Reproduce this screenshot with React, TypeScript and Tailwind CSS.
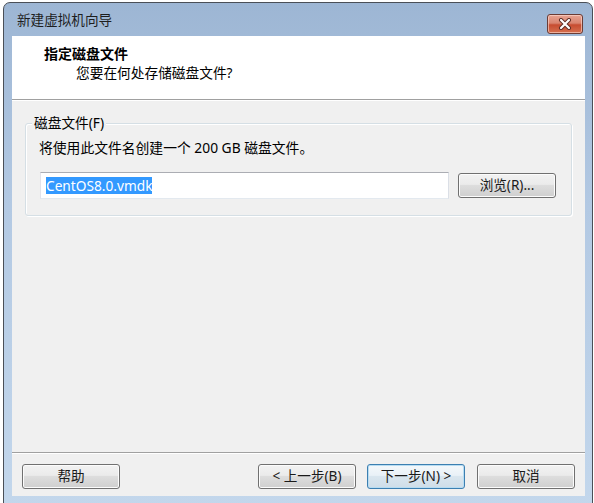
import React from "react";

const font = { fontFamily: '"Segoe UI","Noto Sans","Noto Sans CJK SC",sans-serif' };

function Btn({ children, focused = false, className = "" }: { children: React.ReactNode; focused?: boolean; className?: string }) {
  return (
    <div
      className={
        "h-[25px] w-[98px] rounded-[3px] border flex items-center justify-center text-[13.6px] text-[#1a1a1a] " +
        (focused
          ? "border-[#3c7fb1] bg-[linear-gradient(to_bottom,#f4f8fb_0%,#e9f1f7_45%,#d9e6ef_50%,#cfdde8_100%)] shadow-[inset_0_0_0_1px_#b7dcf2] "
          : "border-[#707070] bg-[linear-gradient(to_bottom,#f2f2f2_0%,#ebebeb_45%,#dddddd_50%,#cfcfcf_100%)] shadow-[inset_0_0_0_1px_#fcfcfc] ") +
        className
      }
    >
      {children}
    </div>
  );
}

export default function App() {
  return (
    <div className="w-[594px] h-[503px] bg-white pt-[2px] pl-[3px] pr-[1px] overflow-hidden" style={font}>
      <div className="h-[510px] border border-[#4a4f57] rounded-t-[7px] bg-[linear-gradient(to_bottom,#9db6d4_0%,#b3c9e3_40%,#c3d7ec_100%)] flex flex-col">
        {/* title bar */}
        <div className="h-[33px] flex items-center pl-[13px] pr-[9px] shrink-0">
          <span className="text-[13.6px] text-[#1e1e1e] pt-[2px]">新建虚拟机向导</span>
          <div className="ml-auto mt-[8px] h-[20px] w-[36px] rounded-[3px] border border-[#6b3c35] bg-[linear-gradient(to_bottom,#e8a493_0%,#d9846f_45%,#c74c30_55%,#d5704f_100%)] shadow-[inset_0_0_0_1px_rgba(255,220,210,0.6)] flex items-center justify-center">
            <svg width="14" height="12" viewBox="0 0 14 12">
              <path d="M3 2 L11 10 M11 2 L3 10" stroke="#5a2a22" strokeWidth="4" strokeLinecap="round" />
              <path d="M3 2 L11 10 M11 2 L3 10" stroke="#ffffff" strokeWidth="2.2" strokeLinecap="round" />
            </svg>
          </div>
        </div>
        {/* client */}
        <div className="ml-[8px] mr-[7px] h-[460px] bg-[#f0f0f0] flex flex-col shrink-0">
          {/* header */}
          <div className="h-[64px] bg-white border-b border-[#a0a0a0] flex flex-col shrink-0">
            <div className="pl-[32px] pt-[9px] text-[14px] font-bold text-black leading-[18px]">指定磁盘文件</div>
            <div className="pl-[64px] pt-[1px] text-[13.7px] text-black leading-[18px]">您要在何处存储磁盘文件?</div>
          </div>
          <div className="h-px bg-white shrink-0" />
          {/* content */}
          <div className="flex-1 px-[13px] pt-[22px]">
            <div className="relative h-[93px] rounded-[3px] border border-[#d5dfe5] shadow-[inset_1px_1px_0_#ffffff,1px_1px_0_#ffffff]">
              <div className="absolute left-[6px] top-[-10px] bg-[#f0f0f0] px-[2px] text-[13.7px] leading-[18px] text-black">
                磁盘文件(F)
              </div>
              <div className="pl-[13px] pt-[15px] text-[13.8px] leading-[18px] text-black">
                将使用此文件名创建一个 200 GB 磁盘文件。
              </div>
              <div className="flex items-center pl-[14px] pt-[15px]">
                <div className="h-[27px] w-[409px] bg-white border border-[#abadb3] border-l-[#e2e3ea] border-r-[#dbdfe6] border-b-[#e3e9ef] flex items-center pl-[5px]">
                  <span className="bg-[#3399ff] text-white text-[13.7px] leading-[17px]">CentOS8.0.vmdk</span>
                </div>
                <Btn className="ml-[9px] h-[24px]">浏览(R)...</Btn>
              </div>
            </div>
          </div>
          {/* footer */}
          <div className="h-px bg-[#a0a0a0] shrink-0" />
          <div className="h-px bg-white shrink-0" />
          <div className="h-[42px] flex items-start pt-[10px] pl-[10px] pr-[10px] shrink-0">
            <Btn>帮助</Btn>
            <Btn className="ml-auto">&lt; 上一步(B)</Btn>
            <Btn focused className="ml-[11px]">下一步(N) &gt;</Btn>
            <Btn className="ml-[12px]">取消</Btn>
          </div>
        </div>
      </div>
    </div>
  );
}
